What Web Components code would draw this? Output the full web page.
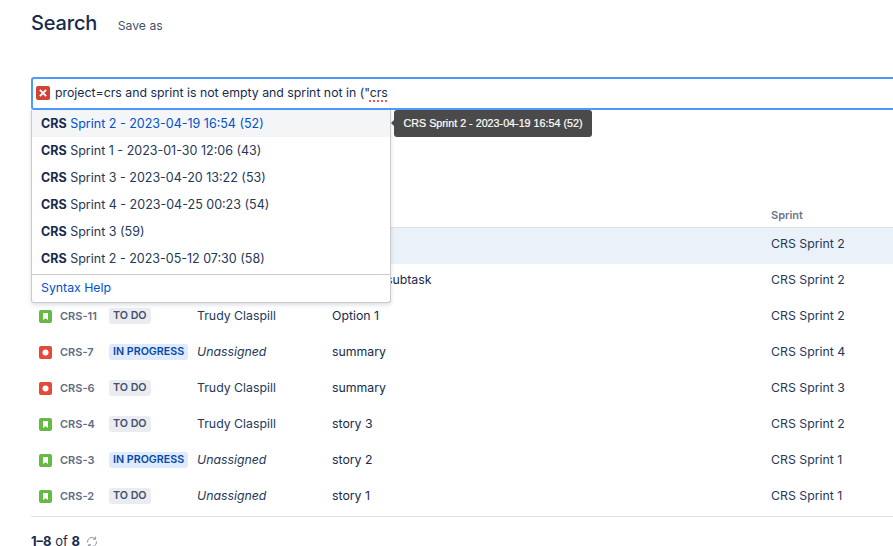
<!DOCTYPE html>
<html><head><meta charset="utf-8">
<style>
html,body{margin:0;padding:0;background:#fff;overflow:hidden;height:546px;width:893px}
body{font-family:Inter,"Liberation Sans",sans-serif;color:#172b4d}
</style></head><body>
<jira-search>
  <search-header slot="header" title="Search" action="Save as"></search-header>
  <jql-input slot="input" query="project=crs and sprint is not empty and sprint not in (&quot;" bad="crs"></jql-input>
  <issue-table slot="table"></issue-table>
  <result-footer slot="footer"></result-footer>
</jira-search>
<script>
const def=(name,html)=>{customElements.define(name,class extends HTMLElement{
  constructor(){super();this.attachShadow({mode:'open'});}
  connectedCallback(){this.shadowRoot.innerHTML=typeof html==='function'?html(this):html;}
});};

def('jira-search',`<style>
:host{display:block;position:relative;width:1010px;height:546px;box-sizing:border-box;padding-left:31px;overflow:hidden}
.hd{height:77px}.inp{height:33px}.tb{padding-top:96px}
</style>
<div class="hd"><slot name="header"></slot></div>
<div class="inp"><slot name="input"></slot></div>
<div class="tb"><slot name="table"></slot></div>
<slot name="footer"></slot>
<jql-dropdown></jql-dropdown>`);

def('search-header',el=>`<style>
:host{display:flex;align-items:baseline;gap:20.5px;padding-top:10px}
h1{margin:0;font:500 20px/26px Inter,sans-serif;color:#172b4d;letter-spacing:-.15px}
span{font:400 12.2px/16px Inter,sans-serif;color:#42526e}
</style><h1>${el.getAttribute('title')}</h1><span>${el.getAttribute('action')}</span>`);

def('jql-input',el=>`<style>
:host{display:flex;align-items:center;box-sizing:border-box;height:33px;border:2px solid #4c9aff;border-right:0;border-radius:3px 0 0 3px;padding:0 0 1px 3px;gap:5px;background:#fff;font:400 12.3px/16px Inter,sans-serif;color:#172b4d}
svg{flex:none}
u{text-decoration:underline dotted #ef5a4a 1.5px;text-underline-offset:3px}
</style>
<svg width="14" height="14" viewBox="0 0 14 14"><rect width="14" height="14" rx="2" fill="#d04437"/><path d="M4.6 4.6l4.8 4.8M9.4 4.6L4.6 9.4" stroke="#fff" stroke-width="1.9" stroke-linecap="square"/></svg>
<span>${el.getAttribute('query').replace(/"/g,'&quot;')}<u>${el.getAttribute('bad')}</u></span>`);

def('jql-dropdown',`<style>
:host{position:absolute;left:31px;top:110px;width:360px;box-sizing:border-box;background:#fff;border:1px solid #c9cbd0;border-top:0;border-radius:0 0 3px 3px;box-shadow:0 2px 4px rgba(9,30,66,.14);font:400 12.5px/28px Inter,sans-serif;color:#172b4d}
.help{border-top:1px solid #c9ccd2;margin-top:2px;height:27px;padding-left:9px;color:#0052cc;font-size:12.3px;line-height:25px}
</style>
<sprint-option active label="Sprint 2 - 2023-04-19 16:54 (52)"></sprint-option>
<sprint-option label="Sprint 1 - 2023-01-30 12:06 (43)"></sprint-option>
<sprint-option label="Sprint 3 - 2023-04-20 13:22 (53)"></sprint-option>
<sprint-option label="Sprint 4 - 2023-04-25 00:23 (54)"></sprint-option>
<sprint-option label="Sprint 3 (59)"></sprint-option>
<sprint-option label="Sprint 2 - 2023-05-12 07:30 (58)"></sprint-option>
<div class="help">Syntax Help</div>
<jql-tooltip>CRS Sprint 2 - 2023-04-19 16:54 (52)</jql-tooltip>`);

def('sprint-option',el=>`<style>
:host{display:block;height:27px;padding-left:9px;white-space:nowrap;color:#253858}
:host([active]){background:#f4f5f7;color:#0052cc}
b{font-weight:700;color:#172b4d}
</style><b>CRS</b> ${el.getAttribute('label')}`);

def('jql-tooltip',`<style>
:host{position:absolute;left:362px;top:0;height:27px;box-sizing:border-box;padding:0 9px 0 9.5px;background:#4a4a4a;border-radius:3px;color:#fff;font:400 10.74px/26px "Liberation Sans",Arial,sans-serif;white-space:nowrap;-webkit-text-stroke:.2px #fff}
:host::before{content:"";position:absolute;left:-3px;top:10px;border:3px solid transparent;border-left:0;border-right-color:#4a4a4a}
</style><slot></slot>`);

const story=`<svg width="13" height="13" viewBox="0 0 13 13"><rect width="13" height="13" rx="2" fill="#65ba43"/><path d="M4 3h5v7L6.5 8.2 4 10z" fill="#fff"/></svg>`;
const bug=`<svg width="13" height="13" viewBox="0 0 13 13"><rect width="13" height="13" rx="2" fill="#e5493a"/><circle cx="6.5" cy="6.5" r="3" fill="#fff"/></svg>`;

def('status-lozenge',el=>`<style>
:host{display:inline-block;height:16px;box-sizing:border-box;padding:0 4px;border-radius:3px;background:#ebecf0;color:#42526e;font:600 10.7px/15px Inter,sans-serif;white-space:nowrap;vertical-align:top}
:host([kind=progress]){background:#deebff;color:#0747a6}
</style><slot></slot>`);

def('issue-row',el=>{
 const a=n=>el.getAttribute(n)||'';
 return `<style>
:host{display:grid;grid-template-columns:29px 49px 88px 135px 439px 1fr;height:36px;box-sizing:border-box;padding-bottom:4px;align-items:center;font:400 12.3px/16px Inter,sans-serif;color:#253858}
:host([selected]){background:#ebf1f9}
.ic{display:flex;padding-left:8px}.k{font-size:11px;font-weight:600;color:#5e6c84}
.su{color:#172b4d;white-space:nowrap}i{font-style:italic}
.ic svg{display:block}
.st{display:flex}
</style>
<div class="ic">${a('type')==='bug'?bug:a('type')==='story'?story:''}</div>
<div class="k">${a('key')}</div>
<div class="st">${a('status')?`<status-lozenge kind="${a('status')==='IN PROGRESS'?'progress':'todo'}">${a('status')}</status-lozenge>`:''}</div>
<div>${a('who')==='Unassigned'?'<i>Unassigned</i>':a('who')}</div>
<div class="su">${a('sum')}</div>
<div>${a('sprint')}</div>`});

def('issue-table',`<style>
:host{display:block}
.h{display:grid;grid-template-columns:740px 1fr;height:21px;border-bottom:1px solid #dfe1e6;font:600 11px/14px Inter,sans-serif;color:#6b778c}
.h div:last-child{padding-top:2px}
.end{border-top:1px solid #dfe1e6}
</style>
<div class="h"><div></div><div>Sprint</div></div>
<issue-row selected sprint="CRS Sprint 2"></issue-row>
<issue-row sum="Option 1 &nbsp;subtask" sprint="CRS Sprint 2"></issue-row>
<issue-row type="story" key="CRS-11" status="TO DO" who="Trudy Claspill" sum="Option 1" sprint="CRS Sprint 2"></issue-row>
<issue-row type="bug" key="CRS-7" status="IN PROGRESS" who="Unassigned" sum="summary" sprint="CRS Sprint 4"></issue-row>
<issue-row type="bug" key="CRS-6" status="TO DO" who="Trudy Claspill" sum="summary" sprint="CRS Sprint 3"></issue-row>
<issue-row type="story" key="CRS-4" status="TO DO" who="Trudy Claspill" sum="story 3" sprint="CRS Sprint 2"></issue-row>
<issue-row type="story" key="CRS-3" status="IN PROGRESS" who="Unassigned" sum="story 2" sprint="CRS Sprint 1"></issue-row>
<issue-row type="story" key="CRS-2" status="TO DO" who="Unassigned" sum="story 1" sprint="CRS Sprint 1"></issue-row>
<div class="end"></div>`);

def('result-footer',`<style>
:host{display:flex;align-items:center;gap:6px;height:13px;margin-top:18px;font:400 13px/13px Inter,sans-serif;color:#172b4d}
b{font-weight:700}
</style><span><b>1–8</b> of <b>8</b></span>
<svg width="12" height="12" viewBox="0 0 12 12" fill="none" stroke="#8c95a6" stroke-width="1"><path d="M1.5 6.5A4.5 4.5 0 0 1 9 2.6"/><path d="M9.6 .6v2.6H7"/><path d="M10.5 5.5A4.5 4.5 0 0 1 3 9.4"/><path d="M2.4 11.4V8.8H5"/></svg>`);
</script>
</body></html>
